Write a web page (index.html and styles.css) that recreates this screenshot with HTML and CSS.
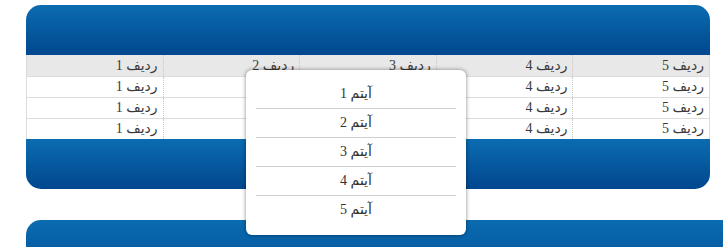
FILE: index.html
```html
<!DOCTYPE html>
<html lang="fa" dir="rtl">
<head>
<meta charset="utf-8">
<link rel="stylesheet" href="styles.css">
</head>
<body>
<div class="page">
  <div class="panel">
    <div class="panel-head"></div>
    <table class="grid">
      <tr class="head-row"><td>ردیف 5</td><td>ردیف 4</td><td>ردیف 3</td><td>ردیف 2</td><td>ردیف 1</td></tr>
      <tr><td>ردیف 5</td><td>ردیف 4</td><td>ردیف 3</td><td>ردیف 2</td><td>ردیف 1</td></tr>
      <tr><td>ردیف 5</td><td>ردیف 4</td><td>ردیف 3</td><td>ردیف 2</td><td>ردیف 1</td></tr>
      <tr><td>ردیف 5</td><td>ردیف 4</td><td>ردیف 3</td><td>ردیف 2</td><td>ردیف 1</td></tr>
    </table>
    <div class="panel-foot"></div>
  </div>
  <div class="panel2"></div>
  <ul class="menu">
    <li>آیتم 1</li>
    <li>آیتم 2</li>
    <li>آیتم 3</li>
    <li>آیتم 4</li>
    <li>آیتم 5</li>
  </ul>
</div>
</body>
</html>
```
FILE: styles.css
```css
html, body {
  margin: 0;
  padding: 0;
  background: #fff;
  overflow: hidden;
}
body {
  width: 723px;
  height: 247px;
  font-family: "Liberation Serif", "DejaVu Sans", serif;
}
.page {
  position: relative;
  padding: 5px 0 0 26px;
  direction: ltr;
}
.panel {
  width: 684px;
}
.panel-head {
  height: 50px;
  border-radius: 15px 15px 0 0;
  background: linear-gradient(#0b6cb0, #01478f);
}
.panel-foot {
  height: 50px;
  border-radius: 0 0 15px 15px;
  background: linear-gradient(#0b6cb0, #01478f);
}
.grid {
  width: 684px;
  border-collapse: collapse;
  direction: rtl;
  table-layout: fixed;
}
.grid td {
  height: 20px;
  padding: 0 5px 0 5px;
  text-align: right;
  font-size: 14px;
  color: #3a3a3a;
  border-top: 1px solid #dcdcdc;
  border-left: 1px dotted #c8c8c8;
  line-height: 20px;
}
.grid td:last-child {
  border-left: 1px solid #dcdcdc;
}
.grid td:first-child {
  border-right: 1px solid #dcdcdc;
}
.grid tr:first-child td {
  border-top: none;
  height: 21px;
}
.head-row td {
  background: #e8e8e8;
}
.panel2 {
  margin-top: 31px;
  width: 697px;
  height: 27px;
  border-radius: 15px 0 0 0;
  background: linear-gradient(#0b6cb0, #075ea5);
}
.menu {
  position: absolute;
  left: 246px;
  top: 70px;
  width: 200px;
  margin: 0;
  padding: 10px 10px;
  list-style: none;
  background: #fff;
  border-radius: 6px;
  box-shadow: 0 0 4px rgba(0, 0, 0, 0.45);
  direction: rtl;
}
.menu li {
  height: 28px;
  line-height: 28px;
  text-align: center;
  font-size: 14px;
  color: #333;
  border-bottom: 1px solid #cfcfcf;
}
.menu li:last-child {
  border-bottom: none;
  height: 29px;
}
```
